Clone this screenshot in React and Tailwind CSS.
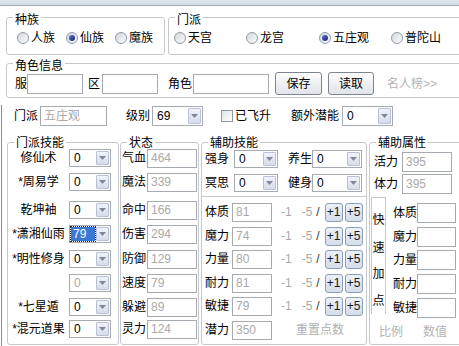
import React from "react";

function Group({ title, className = "", shift = "top-[3px]", children }) {
  return (
    <fieldset className={`border border-[#c5c9ce] rounded-[3px] min-w-0 shrink-0 ${className}`}>
      <legend className="ml-[6px] px-[2px]">
        <span className={`block leading-[12px] relative ${shift}`}>{title}</span>
      </legend>
      {children}
    </fieldset>
  );
}

function Radio({ label, checked, w }) {
  return (
    <div className={`flex items-center h-[14px] ${w}`}>
      <span className="w-[12px] h-[12px] rounded-full border border-[#8f9aa6] bg-gradient-to-br from-[#d3d7dc] to-[#fcfcfc] flex items-center justify-center">
        {checked && <span className="w-[6px] h-[6px] rounded-full bg-gradient-to-br from-[#5b6fd0] to-[#1c2670]" />}
      </span>
      <span className="ml-[2px]">{label}</span>
    </div>
  );
}

function Box({ w, h = "h-[20px]", value, dark }) {
  return (
    <div className={`${w} ${h} shrink-0 border border-[#a6abb1] bg-white flex items-center pl-[3px] ${dark ? "text-black" : "text-[#a9a9a9]"}`}>
      {value}
    </div>
  );
}

function Combo({ w, h = "h-[18px]", value, disabled, sel }) {
  return (
    <div className={`${w} ${h} shrink-0 border border-[#a6abb1] bg-white flex items-stretch p-[1px]`}>
      {sel ? (
        <div className="flex-1 flex items-center pl-[2px] bg-[#3a78d6] text-white outline outline-1 outline-dotted outline-[#222] mr-[1px]">
          {value}
        </div>
      ) : (
        <div className={`flex-1 flex items-center pl-[3px] ${disabled ? "text-[#a9a9a9]" : ""}`}>{value}</div>
      )}
      <div className="w-[13px] border border-[#b9c1d6] rounded-[1px] bg-gradient-to-b from-[#f1f2f9] to-[#d8dcea] flex items-center justify-center">
        <svg width="7" height="4" viewBox="0 0 7 4">
          <path d="M0 0h7L3.5 4z" fill="#7f879a" />
        </svg>
      </div>
    </div>
  );
}

function Btn({ w, h, label, className = "" }) {
  return (
    <div className={`${w} ${h} shrink-0 border border-[#7d8591] rounded-[3px] bg-gradient-to-b from-[#fdfdfd] to-[#e1e4e9] flex items-center justify-center ${className}`}>
      {label}
    </div>
  );
}

function SmallBtn({ label, className = "" }) {
  return (
    <div className={`w-[18px] h-[19px] shrink-0 border border-[#8d9db3] rounded-[3px] bg-gradient-to-b from-[#edf1f7] to-[#d5dde9] flex items-center justify-center text-[#1a1a1a] ${className}`}>
      {label}
    </div>
  );
}

const skillGap = ["mt-[0px]", "mt-[4px]", "mt-[8px]", "mt-[4px]", "mt-[5px]", "mt-[4px]", "mt-[4px]", "mt-[2px]"];

const skills = [
  { name: "修仙术", v: "0" },
  { name: "*周易学", v: "0" },
  { name: "乾坤袖", v: "0" },
  { name: "*潇湘仙雨", v: "79", sel: true },
  { name: "*明性修身", v: "0" },
  { name: "", v: "0", disabled: true },
  { name: "*七星遁", v: "0" },
  { name: "*混元道果", v: "0" },
];

const status = [
  ["气血", "464"],
  ["魔法", "339"],
  ["命中", "166"],
  ["伤害", "294"],
  ["防御", "129"],
  ["速度", "79"],
  ["躲避", "89"],
  ["灵力", "124"],
];

const attrGap = ["mt-[5px]", "mt-[4px]", "mt-[3px]", "mt-[4px]", "mt-[3px]"];
const attrs = [
  ["体质", "81"],
  ["魔力", "74"],
  ["力量", "80"],
  ["耐力", "81"],
  ["敏捷", "79"],
];

const quickGap = ["mt-[6px]", "mt-[4px]", "mt-[3px]", "mt-[4px]", "mt-[4px]"];

export default function App() {
  return (
    <div className="w-[459px] h-[346px] overflow-hidden bg-white font-['Liberation_Sans','Noto_Sans_CJK_SC',sans-serif] text-[12px] leading-[14px] text-black">
      {/* 窗口顶部 */}
      <div className="h-[6px] bg-gradient-to-b from-[#e3e9f0] to-[#d2dae4] border-b border-[#a3acb6]" />

      {/* 种族 / 门派 */}
      <div className="flex mt-[5px] pl-[6px] gap-[3px]">
        <Group title="种族" className="w-[159px] h-[44px]">
          <div className="flex pt-[8px] pl-[10px]">
            <Radio label="人族" w="w-[50px]" />
            <Radio label="仙族" w="w-[50px]" checked />
            <Radio label="魔族" w="w-[50px]" />
          </div>
        </Group>
        <Group title="门派" className="w-[300px] h-[44px]">
          <div className="flex pt-[8px] pl-[5px]">
            <Radio label="天宫" w="w-[72px]" />
            <Radio label="龙宫" w="w-[73px]" />
            <Radio label="五庄观" w="w-[72px]" checked />
            <Radio label="普陀山" w="w-[72px]" />
          </div>
        </Group>
      </div>

      {/* 角色信息 */}
      <div className="mt-[2px] pl-[6px]">
        <Group title="角色信息" className="w-[470px] h-[41px]">
          <div className="flex items-center h-[23px] mt-[3px] pl-[8px]">
            <span>服</span>
            <Box w="w-[56px]" value="" />
            <span className="ml-[5px]">区</span>
            <div className="ml-[2px]"><Box w="w-[56px]" value="" /></div>
            <span className="ml-[10px]">角色</span>
            <div className="ml-[1px]"><Box w="w-[76px]" value="" /></div>
            <Btn w="w-[47px]" h="h-[23px]" label="保存" className="ml-[6px]" />
            <Btn w="w-[46px]" h="h-[23px]" label="读取" className="ml-[6px]" />
            <span className="ml-[13px] text-[#b3b3b3]">名人榜&gt;&gt;</span>
          </div>
        </Group>
      </div>

      {/* 下半部分 */}
      <div className="ml-[1px] border-l border-[#8c8c8c] h-[260px]">
        <div className="flex items-center h-[21px] mt-[7px] pl-[12px]">
          <span>门派</span>
          <div className="ml-[2px]"><Box w="w-[67px]" value="五庄观" /></div>
          <span className="ml-[19px]">级别</span>
          <div className="ml-[2px]"><Combo w="w-[51px]" h="h-[20px]" value="69" /></div>
          <span className="ml-[18px] w-[12px] h-[12px] border border-[#8f98a3] bg-gradient-to-br from-[#e1e4e8] to-white" />
          <span className="ml-[2px]">已飞升</span>
          <span className="ml-[20px]">额外潜能</span>
          <div className="ml-[3px]"><Combo w="w-[51px]" h="h-[20px]" value="0" /></div>
        </div>

        <div className="flex mt-[10px] pl-[5px]">
          {/* 门派技能 */}
          <Group title="门派技能" shift="top-[1px]" className="w-[112px] h-[209px]">
            <div className="flex flex-col">
              {skills.map((s, i) => (
                <div key={i} className={`flex items-center h-[20px] ${skillGap[i]}`}>
                  <span className="w-[61px] text-center">{s.name}</span>
                  <Combo w="w-[42px]" value={s.v} disabled={s.disabled} sel={s.sel} />
                </div>
              ))}
            </div>
          </Group>

          {/* 状态 */}
          <Group title="状态" shift="top-[1px]" className="w-[79px] h-[209px] ml-[1px]">
            <div className="flex flex-col">
              {status.map(([k, v], i) => (
                <div key={k} className={`flex items-center h-[20px] pl-[1px] ${skillGap[i]}`}>
                  <span className="w-[24px]">{k}</span>
                  <div className="ml-[1px]"><Box w="w-[50px]" h="h-[19px]" value={v} /></div>
                </div>
              ))}
            </div>
          </Group>

          {/* 辅助技能 */}
          <Group title="辅助技能" shift="top-[1px]" className="w-[166px] h-[209px] ml-[2px]">
            <div className="flex flex-col">
              <div className="flex items-center h-[20px] pl-[3px] mt-[1px]">
                <span className="w-[24px]">强身</span>
                <div className="ml-[5px]"><Combo w="w-[44px]" value="0" /></div>
                <span className="ml-[10px] w-[24px]">养生</span>
                <Combo w="w-[50px]" value="0" />
              </div>
              <div className="flex items-center h-[20px] pl-[3px] mt-[4px]">
                <span className="w-[24px]">冥思</span>
                <div className="ml-[5px]"><Combo w="w-[44px]" value="0" /></div>
                <span className="ml-[10px] w-[24px]">健身</span>
                <Combo w="w-[50px]" value="0" />
              </div>
              <div className="mt-[3px] border-t border-[#c5c9ce]" />
              {attrs.map(([k, v], i) => (
                <div key={k} className={`flex items-center h-[20px] pl-[3px] ${attrGap[i]}`}>
                  <span className="w-[24px]">{k}</span>
                  <div className="ml-[3px]"><Box w="w-[40px]" h="h-[19px]" value={v} /></div>
                  <span className="ml-[9px] text-[#a9a9a9]">-1</span>
                  <span className="ml-[10px] text-[#a9a9a9]">-5</span>
                  <span className="ml-[4px] text-[#333]">/</span>
                  <SmallBtn label="+1" className="ml-[5px]" />
                  <SmallBtn label="+5" className="ml-[2px]" />
                </div>
              ))}
              <div className="flex items-center h-[20px] pl-[3px] mt-[4px]">
                <span className="w-[24px]">潜力</span>
                <div className="ml-[3px]"><Box w="w-[40px]" h="h-[19px]" value="350" /></div>
                <span className="ml-[24px] text-[#b0b0b0]">重置点数</span>
              </div>
            </div>
          </Group>

          {/* 辅助属性 */}
          <Group title="辅助属性" shift="top-[1px]" className="w-[100px] h-[209px] ml-[2px]">
            <div className="flex flex-col">
              <div className="flex items-center h-[20px] pl-[4px] mt-[4px]">
                <span className="w-[24px]">活力</span>
                <div className="ml-[4px]"><Box w="w-[50px]" value="395" /></div>
              </div>
              <div className="flex items-center h-[20px] pl-[4px] mt-[2px]">
                <span className="w-[24px]">体力</span>
                <div className="ml-[4px]"><Box w="w-[50px]" value="395" /></div>
              </div>
              <div className="flex mt-[3px] ml-[1px]">
                <div className="w-[15px] h-[117px] border-l border-t border-r border-[#c5c9ce] flex flex-col items-center pt-[15px]">
                  <span>快</span>
                  <span className="mt-[14px]">速</span>
                  <span className="mt-[12px]">加</span>
                  <span className="mt-[13px]">点</span>
                </div>
                <div className="flex flex-col ml-[7px]">
                  {attrs.map(([k], i) => (
                    <div key={k} className={`flex items-center h-[20px] ${quickGap[i]}`}>
                      <span className="w-[24px]">{k}</span>
                      <Box w="w-[39px]" value="" dark />
                    </div>
                  ))}
                </div>
              </div>
              <div className="flex mt-[7px] pl-[9px] text-[#b4b4b4]">
                <span>比例</span>
                <span className="ml-[20px]">数值</span>
              </div>
            </div>
          </Group>
        </div>
      </div>
    </div>
  );
}
